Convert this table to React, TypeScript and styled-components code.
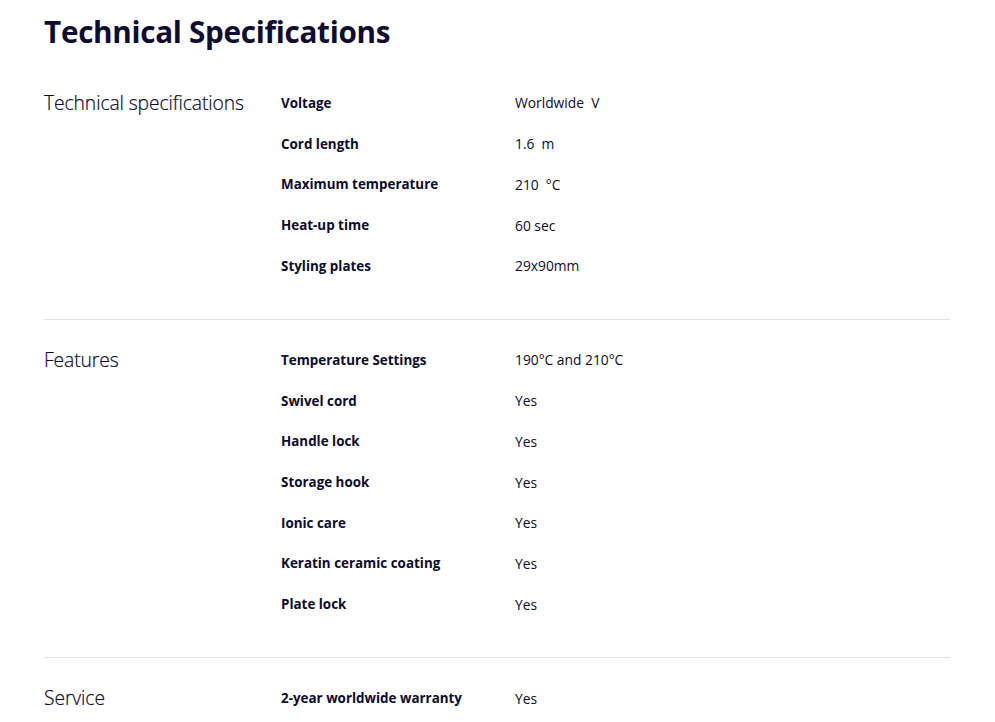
import React from "react";
import styled, { createGlobalStyle } from "styled-components";

const GlobalStyle = createGlobalStyle`
  html, body { margin: 0; padding: 0; background: #ffffff; }
  body { font-family: "Open Sans", "Noto Sans", Arial, sans-serif; color: #0b0a2a; }
`;

const Page = styled.main`
  padding: 0 45px 0 44px;
`;

const Title = styled.h1`
  margin: 0;
  padding-top: 12px;
  height: 62.6px;
  box-sizing: border-box;
  font-size: 29.7px;
  line-height: 40px;
  font-weight: 700;
  color: #0f0c31;
  letter-spacing: -0.3px;
`;

const Section = styled.section`
  display: grid;
  grid-template-columns: 237px 234px 1fr;
  padding: 20px 0 32.6px;
  border-bottom: 1px solid #e2e2e4;
  &:last-child { border-bottom: none; }
`;

const SectionLabel = styled.h2`
  margin: 0;
  font-size: 19.3px;
  font-weight: 300;
  line-height: 40.7px;
  color: #0b0a2a;
  letter-spacing: -0.1px;
  -webkit-text-stroke: 0.2px #0b0a2a;
`;

const Rows = styled.dl`
  grid-column: 2 / 4;
  display: grid;
  grid-template-columns: 234px 1fr;
  grid-auto-rows: 40.7px;
  margin: 0;
`;

const Key = styled.dt`
  display: flex;
  align-items: center;
  font-size: 13.4px;
  font-weight: 700;
  color: #0b0a2a;
`;

const Value = styled.dd`
  display: flex;
  align-items: center;
  margin: 0;
  font-size: 13.8px;
  font-weight: 400;
  color: #0b0a2a;
  white-space: pre;
`;

type Spec = [string, string];

const sections: { title: string; rows: Spec[] }[] = [
  {
    title: "Technical specifications",
    rows: [
      ["Voltage", "Worldwide  V"],
      ["Cord length", "1.6  m"],
      ["Maximum temperature", "210  °C"],
      ["Heat-up time", "60 sec"],
      ["Styling plates", "29x90mm"],
    ],
  },
  {
    title: "Features",
    rows: [
      ["Temperature Settings", "190°C and 210°C"],
      ["Swivel cord", "Yes"],
      ["Handle lock", "Yes"],
      ["Storage hook", "Yes"],
      ["Ionic care", "Yes"],
      ["Keratin ceramic coating", "Yes"],
      ["Plate lock", "Yes"],
    ],
  },
  {
    title: "Service",
    rows: [["2-year worldwide warranty", "Yes"]],
  },
];

export default function App() {
  return (
    <>
      <GlobalStyle />
      <Page>
        <Title>Technical Specifications</Title>
        {sections.map((s) => (
          <Section key={s.title}>
            <SectionLabel>{s.title}</SectionLabel>
            <Rows>
              {s.rows.map(([k, v]) => (
                <React.Fragment key={k}>
                  <Key>{k}</Key>
                  <Value>{v}</Value>
                </React.Fragment>
              ))}
            </Rows>
          </Section>
        ))}
      </Page>
    </>
  );
}
